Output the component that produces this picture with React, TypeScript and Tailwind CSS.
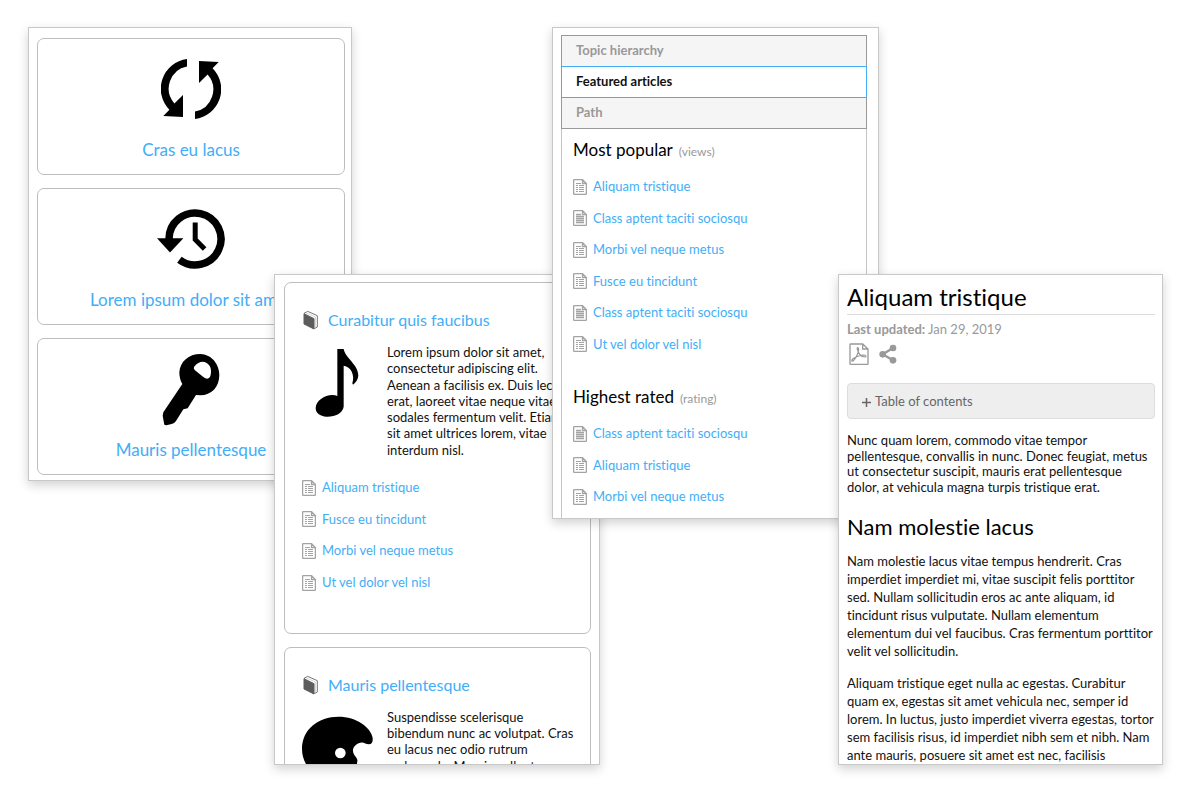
import type { ReactNode } from 'react';

const panel =
  'row-start-1 min-w-0 self-start overflow-hidden border border-[#c8c8c8] bg-white shadow-[0_4px_10px_rgba(0,0,0,0.18)]';
const card = 'rounded-[7px] border border-[#bdbdbd] bg-white';
const link = 'text-[#42aef7] hover:underline';

function SyncIcon() {
  return (
    <svg width="60" height="60" viewBox="0 0 60 60" aria-hidden="true">
      <path d="M26 0V7.4A22.5 22.5 0 0 0 13.4 44.4L22 36V58L2.3 56.9L8.4 50.8A30 30 0 0 1 26 0Z" />
      <path d="M34 60V52.6A22.5 22.5 0 0 0 46.6 15.6L38 24V2L57.7 3.1L51.6 9.2A30 30 0 0 1 34 60Z" />
    </svg>
  );
}

function HistoryIcon() {
  return (
    <svg width="72" height="60" viewBox="0 0 72 60" aria-hidden="true">
      <path d="M14 30A26 26 0 1 1 24.4 50.8" fill="none" stroke="#000" strokeWidth="7.5" />
      <path d="M2 29.3H28.4L15 43.4Z" />
      <path d="M40.2 13.6V30.4L49.6 40" fill="none" stroke="#000" strokeWidth="5" />
    </svg>
  );
}

function KeyIcon() {
  return (
    <svg width="62" height="75" viewBox="420 301 186 225" aria-hidden="true">
      <path
        fillRule="evenodd"
        d="M541 307C575 308 598 338 598 370C598 406 574 431 541 431L528 430L503 470L490 473L468 508Q463 515 455 517L439 521L433 519L428 492L430 482L487 397C481 388 478 375 478 362C480 330 506 307 541 307ZM522 346C530 334 540 330 548 330C564 331 574 344 573 360C573 371 570 379 562 381Q556 381 550 376L524 355Q520 351 522 346Z"
      />
    </svg>
  );
}

function NoteIcon() {
  return (
    <svg width="72" height="72" viewBox="97 234 216 216" aria-hidden="true">
      <path d="M203 237H222C227 265 266 283 266 317C265 329 258 338 250 344L248 340C256 315 244 290 222 287V410C219 430 195 441 171 440C150 439 138 429 138 414C138 393 164 375 188 375Q197 375 203 378Z" />
    </svg>
  );
}

function PaletteIcon() {
  return (
    <svg width="72" height="72" viewBox="96 252 216 216" aria-hidden="true">
      <path
        fillRule="evenodd"
        d="M205 263C260 263 303 295 308 327C309 340 305 346 297 346C286 346 282 338 271 341C253 346 246 359 250 371C253 382 264 386 262 397C260 425 225 450 187 450C130 450 96 405 96 360C96 300 146 263 205 263ZM211 356A16 16 0 1 0 211 388A16 16 0 1 0 211 356Z"
      />
    </svg>
  );
}

function BookIcon() {
  return (
    <svg width="16" height="20" viewBox="100 121 48 60" aria-hidden="true" className="shrink-0">
      <path d="M103 131L114 125L143 138V172L134 177" fill="#fff" stroke="#777" strokeWidth="3" strokeLinejoin="round" />
      <path d="M109 129L137 142V174" fill="none" stroke="#aaa" strokeWidth="1.5" />
      <path d="M103 132L133 147V178L103 163Z" fill="#5c5c5c" stroke="#5c5c5c" strokeWidth="3" strokeLinejoin="round" />
    </svg>
  );
}

function PageIcon({ columns }: { columns: boolean }) {
  return (
    <svg width="14" height="16" viewBox="0 0 14 16" fill="none" stroke="#a3a3a3" aria-hidden="true" className="shrink-0">
      <path d="M9.5 .6H1.6Q.6 .6 .6 1.6V14.4Q.6 15.4 1.6 15.4H12.4Q13.4 15.4 13.4 14.4V4.5ZM9.5 .6V4.5H13.4" strokeWidth="1.3" />
      {columns ? (
        <path d="M3 4.5H8M3 6.5H5M6 6.5H11M3 8.5H5M6 8.5H11M3 10.5H5M6 10.5H11M3 12.5H5M6 12.5H11" strokeWidth="1.2" />
      ) : (
        <path d="M3 4.5H8M3 6.5H11M3 8.5H11M3 10.5H11M3 12.5H11" strokeWidth="1.5" />
      )}
    </svg>
  );
}

function PdfIcon() {
  return (
    <svg width="20" height="22" viewBox="59 234 60 66" fill="none" stroke="#999" strokeWidth="4" aria-hidden="true">
      <path d="M100 237H64Q62 237 62 239V296Q62 298 64 298H114Q116 298 116 296V252ZM100 237V252H116" />
      <path
        d="M68 289C76 287 87 265 88 255C88 246 82 245 84 253C87 265 95 275 106 276C113 275 109 270 102 270C90 271 78 276 70 282Q66 286 68 289"
        strokeWidth="3.6"
      />
    </svg>
  );
}

function ShareIcon() {
  return (
    <svg width="18" height="20" viewBox="144 239 54 60" fill="#999" aria-hidden="true">
      <path d="M186 251L155 270L186 288" fill="none" stroke="#999" strokeWidth="7" />
      <circle cx="186" cy="251" r="10" />
      <circle cx="155" cy="270" r="10" />
      <circle cx="186" cy="288" r="10" />
    </svg>
  );
}

function Tile({ icon, title }: { icon: ReactNode; title: string }) {
  return (
    <a href="#" className={`${card} block pb-[13px] text-center`}>
      <span className="flex h-[100px] items-center justify-center">{icon}</span>
      <span className="block text-[17px] leading-[22px] text-[#42aef7]">{title}</span>
    </a>
  );
}

function ArticleList({ items, className }: { items: string[]; className: string }) {
  return (
    <ul className={`grid auto-rows-fr ${className}`}>
      {items.map((item, index) => (
        <li key={index} className="flex items-center gap-1.5">
          <PageIcon columns={!item.startsWith('Class')} />
          <a href="#" className={link}>
            {item}
          </a>
        </li>
      ))}
    </ul>
  );
}

function Category({ title, icon, text, children }: { title: string; icon: ReactNode; text: string; children?: ReactNode }) {
  return (
    <article className={`${card} pt-[25px] pr-3 pb-[34px] pl-[17px]`}>
      <h2 className="flex items-center gap-[9px] pl-px text-base">
        <BookIcon />
        <a href="#" className={link}>
          {title}
        </a>
      </h2>
      <div className="mt-3 flex gap-[13px]">
        <div className="mt-1 shrink-0">{icon}</div>
        <p className="leading-tight">{text}</p>
      </div>
      {children}
    </article>
  );
}

const tabs = ['Topic hierarchy', 'Featured articles', 'Path'];

export default function App() {
  return (
    <main className="grid min-h-screen grid-cols-[minmax(0,246fr)_minmax(0,78fr)_minmax(0,200fr)_minmax(0,48fr)_minmax(0,238fr)_minmax(0,41fr)_minmax(0,284fr)] bg-white pt-[27px] pr-[37px] pl-7 font-['Lato',sans-serif] text-[13px] text-[#111] [font-variant-ligatures:none]">
      <section className={`${panel} col-start-1 col-end-3 flex h-[454px] flex-col gap-[13px] pt-[10px] pr-1.5 pl-2`}>
        <Tile icon={<SyncIcon />} title="Cras eu lacus" />
        <Tile icon={<HistoryIcon />} title="Lorem ipsum dolor sit amet" />
        <Tile icon={<KeyIcon />} title="Mauris pellentesque" />
      </section>

      <section className={`${panel} col-start-2 col-end-5 mt-[247px] flex h-[491px] flex-col gap-[13px] pt-[7px] pr-2 pl-[9px]`}>
        <Category
          title="Curabitur quis faucibus"
          icon={<NoteIcon />}
          text="Lorem ipsum dolor sit amet, consectetur adipiscing elit. Aenean a facilisis ex. Duis lectus erat, laoreet vitae neque vitae, sodales fermentum velit. Etiam sit amet ultrices lorem, vitae interdum nisl."
        >
          <ArticleList
            className="mt-[14px] h-[127px]"
            items={['Aliquam tristique', 'Fusce eu tincidunt', 'Morbi vel neque metus', 'Ut vel dolor vel nisl']}
          />
        </Category>
        <Category
          title="Mauris pellentesque"
          icon={<PaletteIcon />}
          text="Suspendisse scelerisque bibendum nunc ac volutpat. Cras eu lacus nec odio rutrum malesuada. Mauris pellentesque."
        />
      </section>

      <section className={`${panel} col-start-4 col-end-7 flex h-[492px] flex-col pt-[7px] pr-[11px] pl-2`}>
        <div role="tablist" className="flex shrink-0 flex-col">
          {tabs.map((tab) => {
            const active = tab === 'Featured articles';
            return (
              <button
                key={tab}
                type="button"
                role="tab"
                aria-selected={active}
                className={
                  active
                    ? 'z-10 -mt-px h-8 border border-[#42aef7] bg-white px-3.5 text-left font-bold'
                    : '-mt-px h-8 border border-[#999] bg-[#f5f5f5] px-3.5 text-left font-bold text-[#999] first:mt-0'
                }
              >
                {tab}
              </button>
            );
          })}
        </div>
        <div role="tabpanel" className="grow border-x border-[#c4c4c4] px-[11px] pt-[9px]">
          <h2 className="flex items-baseline gap-1.5 text-[17px] leading-6 text-black">
            Most popular <small className="text-xs text-[#999]">(views)</small>
          </h2>
          <ArticleList
            className="mt-[9px] h-[189px]"
            items={[
              'Aliquam tristique',
              'Class aptent taciti sociosqu',
              'Morbi vel neque metus',
              'Fusce eu tincidunt',
              'Class aptent taciti sociosqu',
              'Ut vel dolor vel nisl',
            ]}
          />
          <h2 className="mt-[25px] flex items-baseline gap-1.5 text-[17px] leading-6 text-black">
            Highest rated <small className="text-xs text-[#999]">(rating)</small>
          </h2>
          <ArticleList
            className="mt-[9px] h-[95px]"
            items={['Class aptent taciti sociosqu', 'Aliquam tristique', 'Morbi vel neque metus']}
          />
        </div>
      </section>

      <article className={`${panel} col-start-6 col-end-8 mt-[247px] h-[491px] pt-[7px] pr-[7px] pl-2`}>
        <h1 className="border-b border-[#ddd] pb-0.5 text-2xl leading-[30px] text-black">Aliquam tristique</h1>
        <p className="mt-1.5 leading-4 text-[#999]">
          <b>Last updated:</b> Jan 29, 2019
        </p>
        <div className="mt-1.5 flex items-center gap-2.5 pl-0.5">
          <button type="button" aria-label="Save as PDF">
            <PdfIcon />
          </button>
          <button type="button" aria-label="Share">
            <ShareIcon />
          </button>
        </div>
        <button
          type="button"
          className="mt-[18px] flex h-9 w-full items-center gap-1 rounded-[4px] border border-[#ddd] bg-[#eee] px-3.5 pt-0.5 text-[#666]"
        >
          <svg width="9" height="9" viewBox="0 0 9 9" stroke="currentColor" strokeWidth="1.5" aria-hidden="true">
            <path d="M4.5 0V9M0 4.5H9" />
          </svg>
          Table of contents
        </button>
        <p className="mt-[14px] leading-[1.2]">
          Nunc quam lorem, commodo vitae tempor pellentesque, convallis in nunc. Donec feugiat, metus ut consectetur
          suscipit, mauris erat pellentesque dolor, at vehicula magna turpis tristique erat.
        </p>
        <h2 className="mt-[18px] text-[22px] leading-7 text-black">Nam molestie lacus</h2>
        <p className="mt-[11px] leading-[18px]">
          Nam molestie lacus vitae tempus hendrerit. Cras imperdiet imperdiet mi, vitae suscipit felis porttitor sed.
          Nullam sollicitudin eros ac ante aliquam, id tincidunt risus vulputate. Nullam elementum elementum dui vel
          faucibus. Cras fermentum porttitor velit vel sollicitudin.
        </p>
        <p className="mt-[14px] leading-[18px]">
          Aliquam tristique eget nulla ac egestas. Curabitur quam ex, egestas sit amet vehicula nec, semper id lorem. In
          luctus, justo imperdiet viverra egestas, tortor sem facilisis risus, id imperdiet nibh sem et nibh. Nam ante
          mauris, posuere sit amet est nec, facilisis
        </p>
      </article>
    </main>
  );
}
